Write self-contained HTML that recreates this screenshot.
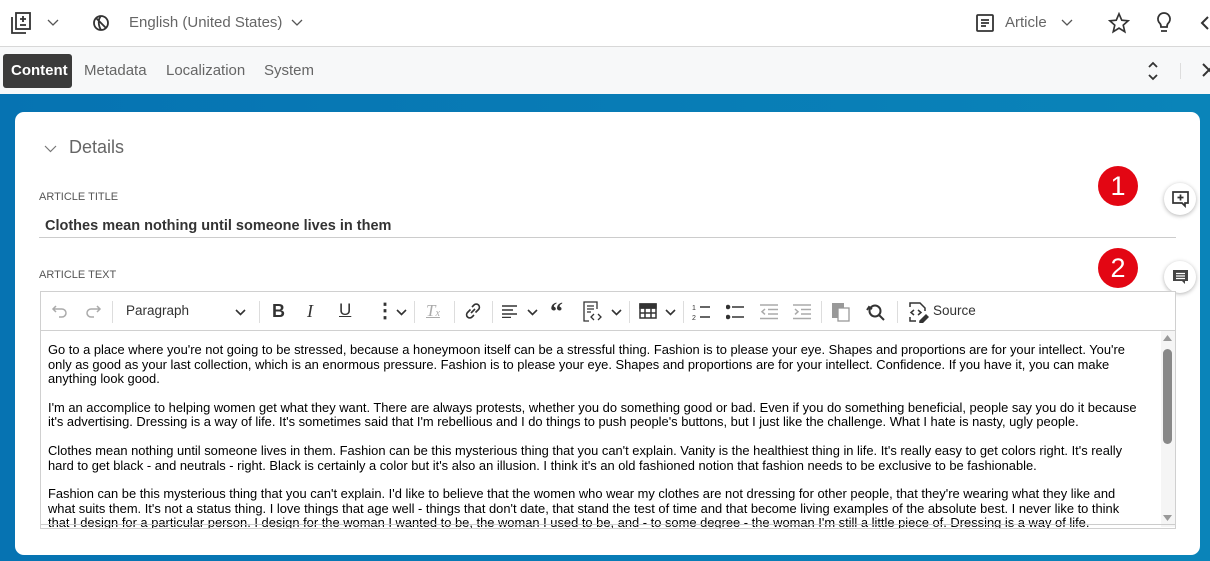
<!DOCTYPE html>
<html><head><meta charset="utf-8"><style>
*{box-sizing:border-box;margin:0;padding:0}
body{width:1210px;height:561px;overflow:hidden;font-family:"Liberation Sans",Arial,sans-serif;background:#fff;position:relative}
.top{position:absolute;left:0;top:0;width:1210px;height:47px;background:#fff;border-bottom:1px solid #d8d8d8}
.tabs{position:absolute;left:0;top:47px;width:1210px;height:47px;background:#f7f8f9}
.blue{position:absolute;left:0;top:94px;width:1210px;height:467px;background:linear-gradient(90deg,#0673b2,#0a84b9)}
.card{position:absolute;left:15px;top:112px;width:1185px;height:443px;background:#fff;border-radius:9px}
.t{position:absolute;white-space:nowrap;color:#555}
svg{position:absolute}
.tb{position:absolute;left:40px;top:291px;width:1136px;height:40px;border:1px solid #d0d0d0;background:#fff}
.ed{position:absolute;left:40px;top:331px;width:1136px;height:198px;border:1px solid #d0d0d0;border-top:none;overflow:hidden;background:#fff}
.ed .txt{position:absolute;left:7px;top:12px;width:1090px;font-size:12.9px;line-height:14.6px;color:#000}
.ed p{margin-bottom:14px}
.sep{position:absolute;top:9px;width:1px;height:22px;background:#ddd}
.badge{position:absolute;width:40px;height:40px;border-radius:50%;background:#e30613;color:#fff;font-size:27px;text-align:center;line-height:40px}
.cb{position:absolute;width:32px;height:32px;border-radius:50%;background:#fff;box-shadow:0 1px 4px rgba(0,0,0,.3)}
</style></head><body>
<div class="top">
<svg style="left:10px;top:11px" width="22" height="24" viewBox="0 0 22 24" fill="none" stroke="#333" stroke-width="1.8"><path d="M2 6v16h14"/><rect x="6" y="2" width="14" height="16"/><path d="M13 5v6M10 8h6M10 14h6"/></svg>
<svg style="left:47px;top:19px" width="12" height="8" viewBox="0 0 12 8" fill="none" stroke="#555" stroke-width="1.3"><path d="M1 1l5 5 5-5"/></svg>
<svg style="left:92px;top:14px" width="18" height="18" viewBox="0 0 18 18" fill="none" stroke="#333" stroke-width="1.8"><circle cx="9" cy="9" r="7"/><path d="M4 4l10 10M9 2c-3 3-3 9 0 14"/></svg>
<div class="t" style="left:129px;top:14px;font-size:15px;color:#666">English (United States)</div>
<svg style="left:291px;top:19px" width="12" height="8" viewBox="0 0 12 8" fill="none" stroke="#555" stroke-width="1.3"><path d="M1 1l5 5 5-5"/></svg>
<svg style="left:976px;top:14px" width="18" height="18" viewBox="0 0 18 18" fill="none" stroke="#333" stroke-width="1.8"><rect x="1" y="1" width="16" height="16" rx="1"/><path d="M5 6h8M5 9h8M5 12h5"/></svg>
<div class="t" style="left:1005px;top:14px;font-size:15px;color:#666">Article</div>
<svg style="left:1061px;top:19px" width="12" height="8" viewBox="0 0 12 8" fill="none" stroke="#555" stroke-width="1.3"><path d="M1 1l5 5 5-5"/></svg>
<svg style="left:1108px;top:12px" width="22" height="22" viewBox="0 0 24 24" fill="none" stroke="#333" stroke-width="1.8"><path d="M12 2l3 7 7 .6-5.4 4.7 1.7 7.2L12 17.6 5.7 21.5l1.7-7.2L2 9.6 9 9z"/></svg>
<svg style="left:1155px;top:12px" width="18" height="22" viewBox="0 0 18 22" fill="none" stroke="#333" stroke-width="1.8"><path d="M9 1a6 6 0 0 0-4 10.5c1 1 1 2 1 3.5h6c0-1.5 0-2.5 1-3.5A6 6 0 0 0 9 1zM6 19h6"/></svg>
<svg style="left:1200px;top:15px" width="10" height="16" viewBox="0 0 10 16" fill="none" stroke="#333" stroke-width="2"><path d="M8 2L2 8l6 6"/></svg>
</div>
<div class="tabs">
<div style="position:absolute;left:3px;top:7px;width:69px;height:34px;background:#3b3b3b;border-radius:3px"></div>
<div class="t" style="left:11px;top:15px;font-size:15px;color:#fff;font-weight:bold">Content</div>
<div class="t" style="left:84px;top:15px;font-size:15px;color:#666">Metadata</div>
<div class="t" style="left:166px;top:15px;font-size:15px;color:#666">Localization</div>
<div class="t" style="left:264px;top:15px;font-size:15px;color:#666">System</div>
<svg style="left:1147px;top:14px" width="12" height="20" viewBox="0 0 12 20" fill="none" stroke="#333" stroke-width="1.8"><path d="M2 6l4-4 4 4M2 14l4 4 4-4"/></svg>
<div style="position:absolute;left:1180px;top:16px;width:1px;height:16px;background:#ddd"></div>
<svg style="left:1202px;top:16px" width="10" height="14" viewBox="0 0 10 14" fill="none" stroke="#333" stroke-width="2"><path d="M1 1l12 12M1 13L13 1"/></svg>
</div>
<div class="blue"></div>
<div class="card"></div>
<svg style="left:44px;top:144px" width="13" height="9" viewBox="0 0 13 9" fill="none" stroke="#777" stroke-width="1.2"><path d="M1 2l5.5 5.5L12 2"/></svg>
<div class="t" style="left:69px;top:137px;font-size:18px;color:#666">Details</div>
<div class="t" style="left:39px;top:191px;font-size:11px;color:#555">ARTICLE TITLE</div>
<div class="t" style="left:45px;top:218px;font-size:14.5px;color:#333;font-weight:bold">Clothes mean nothing until someone lives in them</div>
<div style="position:absolute;left:39px;top:237px;width:1137px;height:1px;background:#ccc"></div>
<div class="t" style="left:39px;top:269px;font-size:11px;color:#555">ARTICLE TEXT</div>
<div class="badge" style="left:1098px;top:166px">1</div>
<div class="badge" style="left:1098px;top:248px">2</div>
<div class="cb" style="left:1164px;top:183px"><svg style="left:8px;top:8px" width="17" height="17" viewBox="0 0 17 17" fill="none" stroke="#333" stroke-width="1.7"><path d="M1 1h15v11h-3v3l-3-3H1z M8.5 3.5v6M5.5 6.5h6"/></svg></div>
<div class="cb" style="left:1164px;top:261px"><svg style="left:8px;top:8px" width="17" height="17" viewBox="0 0 17 17"><path d="M1 1h15v11h-3v3l-3-3H1z" fill="#444"/><path d="M4 4.5h9M4 7h9M4 9.5h9" stroke="#fff" stroke-width="1.2"/></svg></div>
<div class="tb">
<svg style="left:10px;top:12px" width="18" height="14" viewBox="0 0 18 14" fill="none" stroke="#aaa" stroke-width="1.5"><path d="M5 2L2 5l3 3M2 5h9a4 4 0 0 1 0 8H8"/></svg>
<svg style="left:43px;top:12px" width="18" height="14" viewBox="0 0 18 14" fill="none" stroke="#aaa" stroke-width="1.5"><path d="M13 2l3 3-3 3M16 5H7a4 4 0 0 0 0 8h3"/></svg>
<div class="sep" style="left:71px"></div>
<div class="t" style="left:85px;top:11px;font-size:13.5px;color:#333">Paragraph</div>
<svg style="left:194px;top:17px" width="11" height="7" viewBox="0 0 11 7" fill="none" stroke="#333" stroke-width="1.6"><path d="M1 1l4.5 4.5L10 1"/></svg>
<div class="sep" style="left:218px"></div>
<div class="t" style="left:231px;top:9px;font-size:18px;color:#333;font-weight:bold">B</div>
<div class="t" style="left:266px;top:9px;font-size:18px;color:#333;font-style:italic;font-family:'Liberation Serif',serif">I</div>
<div class="t" style="left:298px;top:8px;font-size:17px;color:#333;text-decoration:underline">U</div>
<div class="t" style="left:334px;top:6px;font-size:20px;color:#333;font-weight:bold">⋮</div>
<svg style="left:355px;top:17px" width="11" height="7" viewBox="0 0 11 7" fill="none" stroke="#333" stroke-width="1.6"><path d="M1 1l4.5 4.5L10 1"/></svg>
<div class="sep" style="left:373px"></div>
<div class="t" style="left:385px;top:9px;font-size:17px;color:#aaa;font-style:italic;font-family:'Liberation Serif',serif;text-decoration:underline">T<span style="font-size:10px">x</span></div>
<div class="sep" style="left:413px"></div>
<svg style="left:423px;top:10px" width="18" height="18" viewBox="0 0 18 18" fill="none" stroke="#333" stroke-width="1.6"><path d="M8 5l2-2a3 3 0 0 1 4.5 4.5l-3 3M10 13l-2 2a3 3 0 0 1-4.5-4.5l3-3M7 11l4-4"/></svg>
<div class="sep" style="left:451px"></div>
<svg style="left:461px;top:13px" width="16" height="13" viewBox="0 0 16 13" stroke="#333" stroke-width="1.6"><path d="M0 1h15M0 5h11M0 9h15M0 12.5h9"/></svg>
<svg style="left:486px;top:17px" width="11" height="7" viewBox="0 0 11 7" fill="none" stroke="#333" stroke-width="1.6"><path d="M1 1l4.5 4.5L10 1"/></svg>
<div class="t" style="left:509px;top:5px;font-size:26px;color:#333;font-weight:bold;font-family:'Liberation Serif',serif">“</div>
<svg style="left:542px;top:9px" width="20" height="22" viewBox="0 0 20 22" fill="none" stroke="#333" stroke-width="1.3"><path d="M6 20H1V1h13v7M4 5h7M4 8h7M4 11h4"/><path d="M11 13l-3 3 3 3M15 13l3 3-3 3"/></svg>
<svg style="left:570px;top:17px" width="11" height="7" viewBox="0 0 11 7" fill="none" stroke="#333" stroke-width="1.6"><path d="M1 1l4.5 4.5L10 1"/></svg>
<div class="sep" style="left:588px"></div>
<svg style="left:598px;top:11px" width="18" height="16" viewBox="0 0 18 16" fill="none" stroke="#333" stroke-width="1.5"><rect x="1" y="1" width="16" height="14"/><path d="M1 5h16M1 10h16M6 5v10M12 5v10" /><rect x="1" y="1" width="16" height="4" fill="#333"/></svg>
<svg style="left:624px;top:17px" width="11" height="7" viewBox="0 0 11 7" fill="none" stroke="#333" stroke-width="1.6"><path d="M1 1l4.5 4.5L10 1"/></svg>
<div class="sep" style="left:642px"></div>
<svg style="left:651px;top:11px" width="18" height="18" viewBox="0 0 18 18" stroke="#333" stroke-width="1.6"><path d="M8 4h10M8 14h10"/><text x="0" y="7" font-size="7" fill="#333" stroke="none">1</text><text x="0" y="17" font-size="7" fill="#333" stroke="none">2</text></svg>
<svg style="left:685px;top:12px" width="18" height="16" viewBox="0 0 18 16" stroke="#333" stroke-width="1.6"><circle cx="2" cy="3" r="1.5" fill="#333"/><circle cx="2" cy="13" r="1.5" fill="#333"/><path d="M6 3h12M6 13h12"/></svg>
<svg style="left:719px;top:12px" width="18" height="16" viewBox="0 0 18 16" stroke="#aaa" stroke-width="1.5" fill="none"><path d="M0 1h18M8 5.5h10M8 10h10M0 14.5h18M5 5l-3 2.7 3 2.7"/></svg>
<svg style="left:752px;top:12px" width="18" height="16" viewBox="0 0 18 16" stroke="#aaa" stroke-width="1.5" fill="none"><path d="M0 1h18M8 5.5h10M8 10h10M0 14.5h18M2 5l3 2.7-3 2.7"/></svg>
<div class="sep" style="left:780px"></div>
<svg style="left:790px;top:10px" width="20" height="20" viewBox="0 0 20 20"><rect x="1" y="1" width="12" height="15" fill="#999"/><rect x="7" y="6" width="11" height="13" fill="#fff" stroke="#999" stroke-width="1.3"/></svg>
<svg style="left:825px;top:10px" width="20" height="20" viewBox="0 0 20 20" fill="none" stroke="#333" stroke-width="2"><circle cx="9" cy="9" r="5.5"/><path d="M13 13l5 5M1 8l2-3 3 2"/></svg>
<div class="sep" style="left:856px"></div>
<svg style="left:866px;top:9px" width="22" height="22" viewBox="0 0 22 22" fill="none" stroke="#333" stroke-width="1.5"><path d="M3 6V2h10l5 5v3M3 16v4h6"/><path d="M7 9l-3 2.5L7 14M11 9l3 2.5-3 2.5"/><path d="M13 20l6-6 2 2-6 6h-2z" fill="#333"/></svg>
<div class="t" style="left:892px;top:11px;font-size:13.5px;color:#333">Source</div>
</div>
<div class="ed">
<div class="txt">
<p>Go to a place where you're not going to be stressed, because a honeymoon itself can be a stressful thing. Fashion is to please your eye. Shapes and proportions are for your intellect. You're only as good as your last collection, which is an enormous pressure. Fashion is to please your eye. Shapes and proportions are for your intellect. Confidence. If you have it, you can make anything look good.</p>
<p>I'm an accomplice to helping women get what they want. There are always protests, whether you do something good or bad. Even if you do something beneficial, people say you do it because it's advertising. Dressing is a way of life. It's sometimes said that I'm rebellious and I do things to push people's buttons, but I just like the challenge. What I hate is nasty, ugly people.</p>
<p>Clothes mean nothing until someone lives in them. Fashion can be this mysterious thing that you can't explain. Vanity is the healthiest thing in life. It's really easy to get colors right. It's really hard to get black - and neutrals - right. Black is certainly a color but it's also an illusion. I think it's an old fashioned notion that fashion needs to be exclusive to be fashionable.</p>
<p>Fashion can be this mysterious thing that you can't explain. I'd like to believe that the women who wear my clothes are not dressing for other people, that they're wearing what they like and what suits them. It's not a status thing. I love things that age well - things that don't date, that stand the test of time and that become living examples of the absolute best. I never like to think that I design for a particular person. I design for the woman I wanted to be, the woman I used to be, and - to some degree - the woman I'm still a little piece of. Dressing is a way of life.</p>
</div>
<div style="position:absolute;right:0;top:0;width:14px;height:196px;background:#f5f5f5"></div>
<svg style="right:3px;top:4px" width="9" height="6" viewBox="0 0 9 6"><path d="M0 6L4.5 0 9 6z" fill="#999"/></svg>
<div style="position:absolute;right:3px;top:18px;width:9px;height:95px;background:#888;border-radius:5px"></div>
<svg style="right:3px;top:184px" width="9" height="6" viewBox="0 0 9 6"><path d="M0 0L4.5 6 9 0z" fill="#999"/></svg>
<div style="position:absolute;left:0;top:193px;width:1136px;height:1px;background:#ccc"></div>
</div>
</body></html>
